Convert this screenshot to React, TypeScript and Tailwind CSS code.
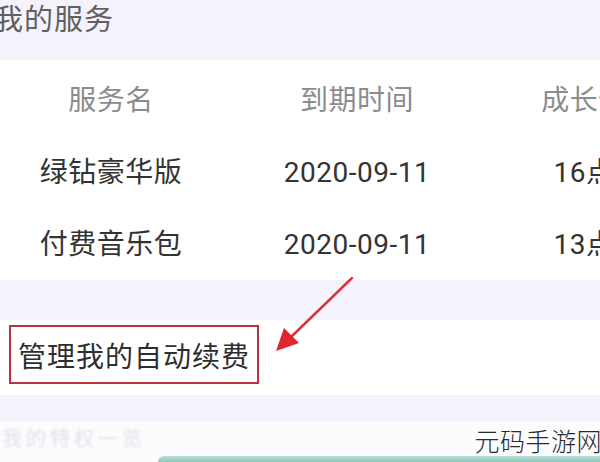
const cjk = "font-['Roboto','Noto_Sans_CJK_SC',sans-serif]";

const rows = [
  { name: "绿钻豪华版", date: "2020-09-11", points: "16点" },
  { name: "付费音乐包", date: "2020-09-11", points: "13点" },
];

function Row({ cells, header }: { cells: string[]; header?: boolean }) {
  return (
    <div className="grid h-[72px] grid-cols-[222px_270px_184px] items-center">
      {cells.map((c, i) => (
        <div
          key={i}
          className={`whitespace-nowrap text-center text-[28px] leading-none tracking-[0.5px] ${
            header ? "text-[#8c8c8c]" : "text-[#333]"
          }`}
        >
          {c}
        </div>
      ))}
    </div>
  );
}

export default function App() {
  return (
    <div className={`relative h-[462px] w-[600px] overflow-hidden bg-[#f4f3fb] ${cjk}`}>
      {/* page title */}
      <div className="h-[60px]">
        <div className="-ml-[6px] flex h-[40px] items-center text-[29px] leading-none tracking-[1px] text-[#606060]">
          我的服务
        </div>
      </div>

      {/* services table */}
      <div className="h-[220px] overflow-hidden bg-white pt-[5px]">
        <div className="w-[676px]">
          <Row header cells={["服务名", "到期时间", "成长值"]} />
          {rows.map((r) => (
            <Row key={r.name} cells={[r.name, r.date, r.points]} />
          ))}
        </div>
      </div>

      <div className="h-[40px]" />

      {/* auto renew entry */}
      <div className="h-[75px] bg-white pt-[5px]">
        <div className="ml-[9px] flex h-[59px] w-[250px] items-center border-2 border-[#b8333c] pl-[7px] pt-[6px]">
          <span className="whitespace-nowrap text-[28px] leading-none tracking-[1px] text-[#2e2e2e]">
            管理我的自动续费
          </span>
        </div>
      </div>

      <div className="h-[27px]" />

      {/* next section, mostly cut off */}
      <div className="flex h-[40px] flex-col bg-[#fcfcfe]">
        <div className="flex h-[34px] items-center pl-[2px] text-[20px] leading-none tracking-[4px] text-[#e2e2e8] blur-[1px]">
          我的特权一览
        </div>
        <div className="ml-[158px] h-[6px] rounded-tl-[6px] bg-gradient-to-b from-[#b9e0d8] to-[#8cc7ba]" />
      </div>

      {/* red annotation arrow */}
      <svg className="absolute left-0 top-0" width="600" height="462" viewBox="0 0 600 462">
        <line x1="352" y1="278" x2="290" y2="338" stroke="#d8343c" strokeWidth="2.5" strokeLinecap="round" />
        <polygon points="276,351 284,328 299,343" fill="#e0262e" />
      </svg>

      {/* watermark */}
      <div className="absolute right-[-2px] top-[430px] text-[25px] font-light leading-none tracking-[0.5px] text-[#2a2a2a]">
        元码手游网
      </div>
    </div>
  );
}
